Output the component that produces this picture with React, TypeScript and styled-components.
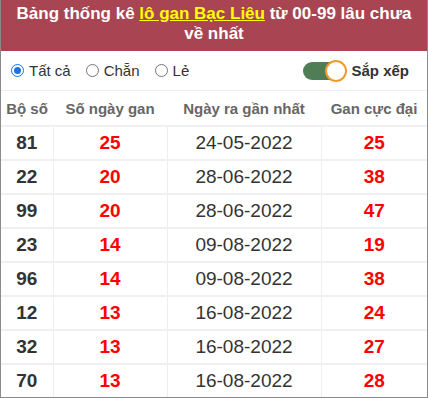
import React from "react";
import styled, { createGlobalStyle } from "styled-components";

const Global = createGlobalStyle`
  * { box-sizing: border-box; }
  html, body { margin: 0; padding: 0; background: #fff; }
  body { font-family: "Liberation Sans", Arial, sans-serif; }
`;

const Frame = styled.div`
  width: 428px;
  height: 398px;
  border: 1px solid #8a8a8a;
  border-top: none;
  overflow: hidden;
  background: #fff;
`;

const Title = styled.div`
  background: #a94452;
  color: #fff;
  font-weight: 700;
  font-size: 17px;
  line-height: 20px;
  text-align: center;
  padding: 4px 12px 3px;
  height: 51px;
  margin: 0 -1px;
`;

const Highlight = styled.span`
  color: #ffff00;
  text-decoration: underline;
`;

const Controls = styled.div`
  height: 40px;
  display: flex;
  align-items: center;
  padding: 0 10px;
  border-bottom: 1px solid #eee;
`;

const RadioGroup = styled.div`
  display: flex;
  align-items: center;
  gap: 15px;
  flex: 1;
`;

const RadioLabel = styled.label`
  display: flex;
  align-items: center;
  gap: 5px;
  font-size: 15px;
  color: #333;
`;

const RadioDot = styled.span<{ $checked?: boolean }>`
  width: 13px;
  height: 13px;
  border-radius: 50%;
  border: 1px solid ${(p) => (p.$checked ? "#1a73e8" : "#767676")};
  display: inline-flex;
  align-items: center;
  justify-content: center;
  background: #fff;
  &::after {
    content: "";
    width: 7px;
    height: 7px;
    border-radius: 50%;
    background: ${(p) => (p.$checked ? "#1a73e8" : "transparent")};
  }
`;

const SortWrap = styled.div`
  display: flex;
  align-items: center;
  gap: 6px;
  font-weight: 700;
  font-size: 15px;
  color: #333;
  margin-right: 8px;
`;

const Track = styled.span`
  position: relative;
  width: 42px;
  height: 18px;
  border-radius: 9px;
  background: #4f7d55;
  display: inline-block;
`;

const Knob = styled.span`
  position: absolute;
  right: -2px;
  top: -2px;
  width: 22px;
  height: 22px;
  border-radius: 50%;
  background: #fff;
  border: 2px solid #f39a2e;
`;

const Table = styled.table`
  width: 100%;
  border-collapse: collapse;
  table-layout: fixed;
`;

const Th = styled.th<{ $w: number }>`
  width: ${(p) => p.$w}px;
  height: 35px;
  font-size: 15px;
  font-weight: 700;
  color: #666;
  text-align: center;
  border-bottom: 2px solid #f0f0f0;
  padding: 0;
`;

const Td = styled.td<{ $red?: boolean; $bold?: boolean }>`
  height: 34px;
  text-align: center;
  font-size: 19px;
  font-weight: ${(p) => (p.$bold ? 700 : 400)};
  color: ${(p) => (p.$red ? "#ff0000" : "#333")};
  border-bottom: 2px solid #f0f0f0;
  border-right: 1px solid #eee;
  padding: 0;
  &:last-child { border-right: none; }
`;

const rows = [
  ["81", "25", "24-05-2022", "25"],
  ["22", "20", "28-06-2022", "38"],
  ["99", "20", "28-06-2022", "47"],
  ["23", "14", "09-08-2022", "19"],
  ["96", "14", "09-08-2022", "38"],
  ["12", "13", "16-08-2022", "24"],
  ["32", "13", "16-08-2022", "27"],
  ["70", "13", "16-08-2022", "28"],
];

export default function App() {
  return (
    <Frame>
      <Global />
      <Title>
        Bảng thống kê <Highlight>lô gan Bạc Liêu</Highlight> từ 00-99 lâu chưa về nhất
      </Title>
      <Controls>
        <RadioGroup>
          <RadioLabel><RadioDot $checked />Tất cả</RadioLabel>
          <RadioLabel><RadioDot />Chẵn</RadioLabel>
          <RadioLabel><RadioDot />Lẻ</RadioLabel>
        </RadioGroup>
        <SortWrap>
          <Track><Knob /></Track>
          Sắp xếp
        </SortWrap>
      </Controls>
      <Table>
        <thead>
          <tr>
            <Th $w={52}>Bộ số</Th>
            <Th $w={114}>Số ngày gan</Th>
            <Th $w={154}>Ngày ra gần nhất</Th>
            <Th $w={106}>Gan cực đại</Th>
          </tr>
        </thead>
        <tbody>
          {rows.map((r) => (
            <tr key={r[0]}>
              <Td $bold>{r[0]}</Td>
              <Td $bold $red>{r[1]}</Td>
              <Td>{r[2]}</Td>
              <Td $bold $red>{r[3]}</Td>
            </tr>
          ))}
        </tbody>
      </Table>
    </Frame>
  );
}
